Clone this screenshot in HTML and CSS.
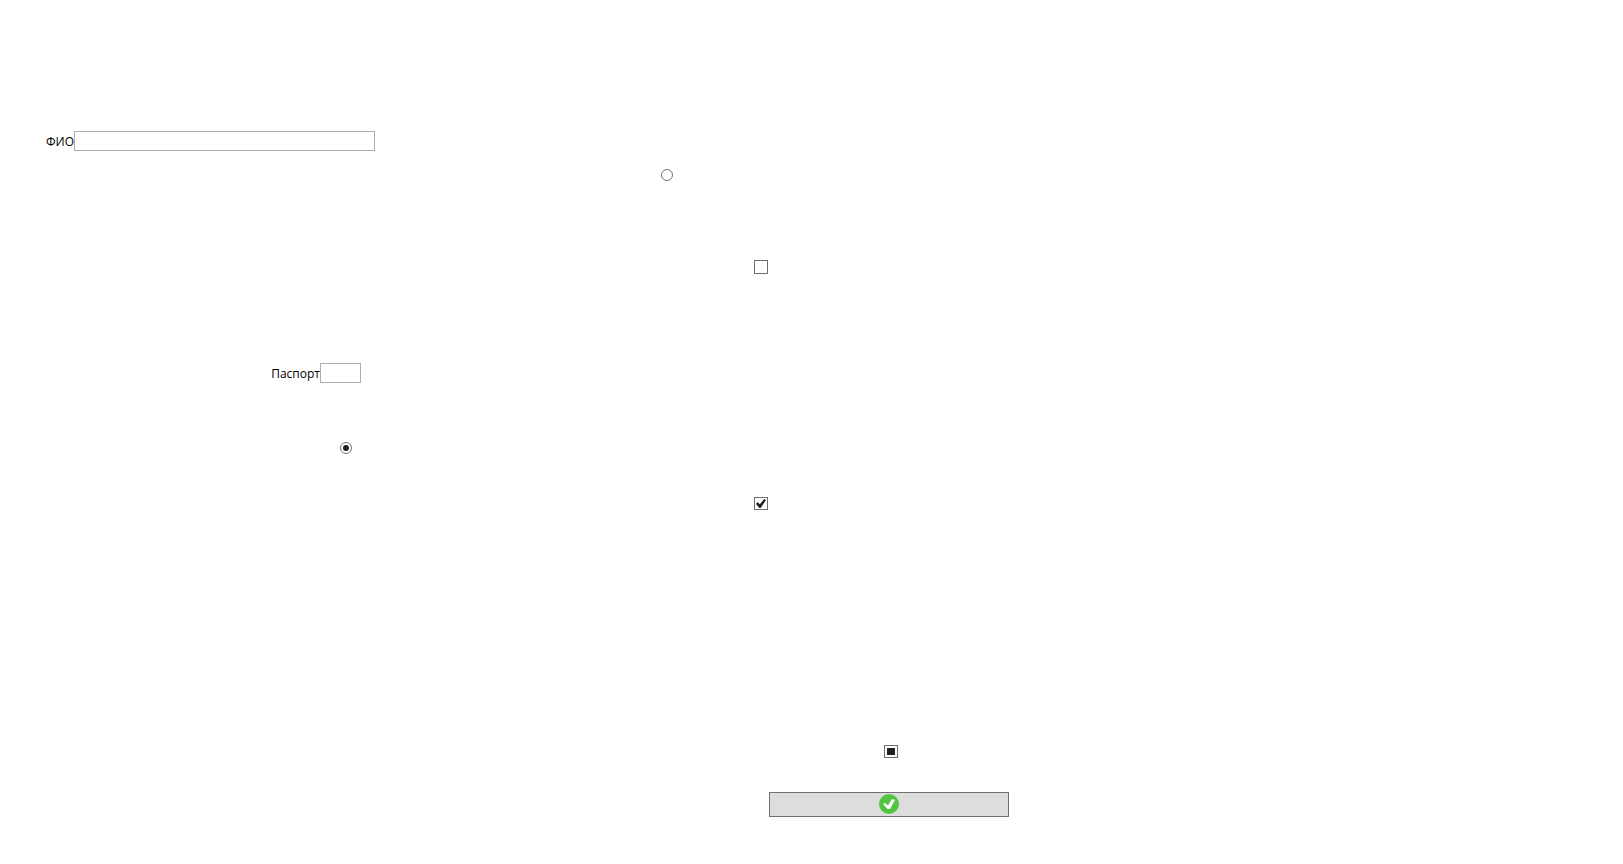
FILE: index.html
```html
<!DOCTYPE html>
<html lang="ru">
<head>
<meta charset="utf-8">
<title>Форма</title>
<link rel="stylesheet" href="styles.css">
</head>
<body>
<form class="form">
  <div class="row row-name">
    <label class="label" for="name">ФИО</label>
    <input class="text text-name" id="name" type="text">
  </div>
  <div class="row row-first-choice">
    <input class="radio" type="radio" name="choice" aria-label="Первый вариант">
  </div>
  <div class="row row-option">
    <input class="check check-tall" type="checkbox" aria-label="Первый флажок">
  </div>
  <div class="row row-passport">
    <label class="label" for="passport">Паспорт</label>
    <input class="text text-passport" id="passport" type="text">
  </div>
  <div class="row row-second-choice">
    <input class="radio" type="radio" name="choice" checked aria-label="Второй вариант">
  </div>
  <div class="row row-checked">
    <input class="check check-tick" type="checkbox" checked aria-label="Второй флажок">
  </div>
  <div class="row row-partial">
    <input class="check check-partial" type="checkbox" aria-checked="mixed" aria-label="Третий флажок">
  </div>
  <div class="row row-submit">
    <button class="submit" type="button" aria-label="Подтвердить">
      <svg class="icon" viewBox="0 0 20 20" aria-hidden="true">
        <circle cx="10" cy="10" r="10" fill="#52c441"/>
        <path d="M4 10 6 9 9 11.5 13 5 16 6 11 15H8.5Z" fill="#fff"/>
      </svg>
    </button>
  </div>
</form>
</body>
</html>
```
FILE: styles.css
```css
* { box-sizing: border-box; }

body {
  margin: 0;
  background: #fff;
  color: #000;
  font: 12px/18px "Open Sans", "Noto Sans", sans-serif;
}

.form {
  display: flex;
  flex-direction: column;
  padding: 131px 0 47px;
}

.row { display: flex; align-items: center; }

.row-name { padding-left: 45px; }
.row-first-choice { margin-top: 18px; padding-left: 661px; }
.row-option { margin-top: 79px; padding-left: 754px; }
.row-passport { margin-top: 89px; padding-left: 271px; }
.row-second-choice { margin-top: 59px; padding-left: 340px; }
.row-checked { margin-top: 43px; padding-left: 754px; }
.row-partial { margin-top: 235px; padding-left: 884px; }
.row-submit { margin-top: 34px; padding-left: 769px; }

.label {
  flex: none;
  padding-top: 2px;
  text-align: right;
  white-space: nowrap;
}
.row-name .label { width: 29px; }
.row-passport .label { width: 49px; }

.text {
  height: 20px;
  margin: 0;
  padding: 0 2px;
  border: 1px solid #abadb3;
  border-radius: 0;
  background: #fff;
  font: inherit;
}
.text-name { width: 301px; }
.text-passport { width: 41px; }

.radio, .check {
  flex: none;
  appearance: none;
  margin: 0;
  border: 1px solid #707070;
  background: #fff;
}

.radio {
  width: 12px;
  height: 12px;
  border-radius: 50%;
}
.radio:checked::before {
  content: "";
  display: block;
  width: 6px;
  height: 6px;
  margin: 2px;
  border-radius: 50%;
  background: #212121;
}

.check { width: 14px; height: 13px; }
.check-tall { height: 14px; }
.check-tick:checked::before {
  content: "";
  display: block;
  width: 10px;
  height: 9px;
  margin: 1px;
  background: #212121;
  clip-path: polygon(0 55%, 16% 34%, 38% 58%, 82% 0, 100% 12%, 46% 100%, 34% 100%);
}
.check-partial::before {
  content: "";
  display: block;
  width: 8px;
  height: 7px;
  margin: 2px;
  background: #212121;
}

.submit {
  display: flex;
  width: 240px;
  height: 25px;
  align-items: flex-start;
  justify-content: center;
  padding: 1px;
  border: 1px solid #707070;
  border-radius: 0;
  background: #ddd;
}
.icon { width: 20px; height: 20px; }
```
